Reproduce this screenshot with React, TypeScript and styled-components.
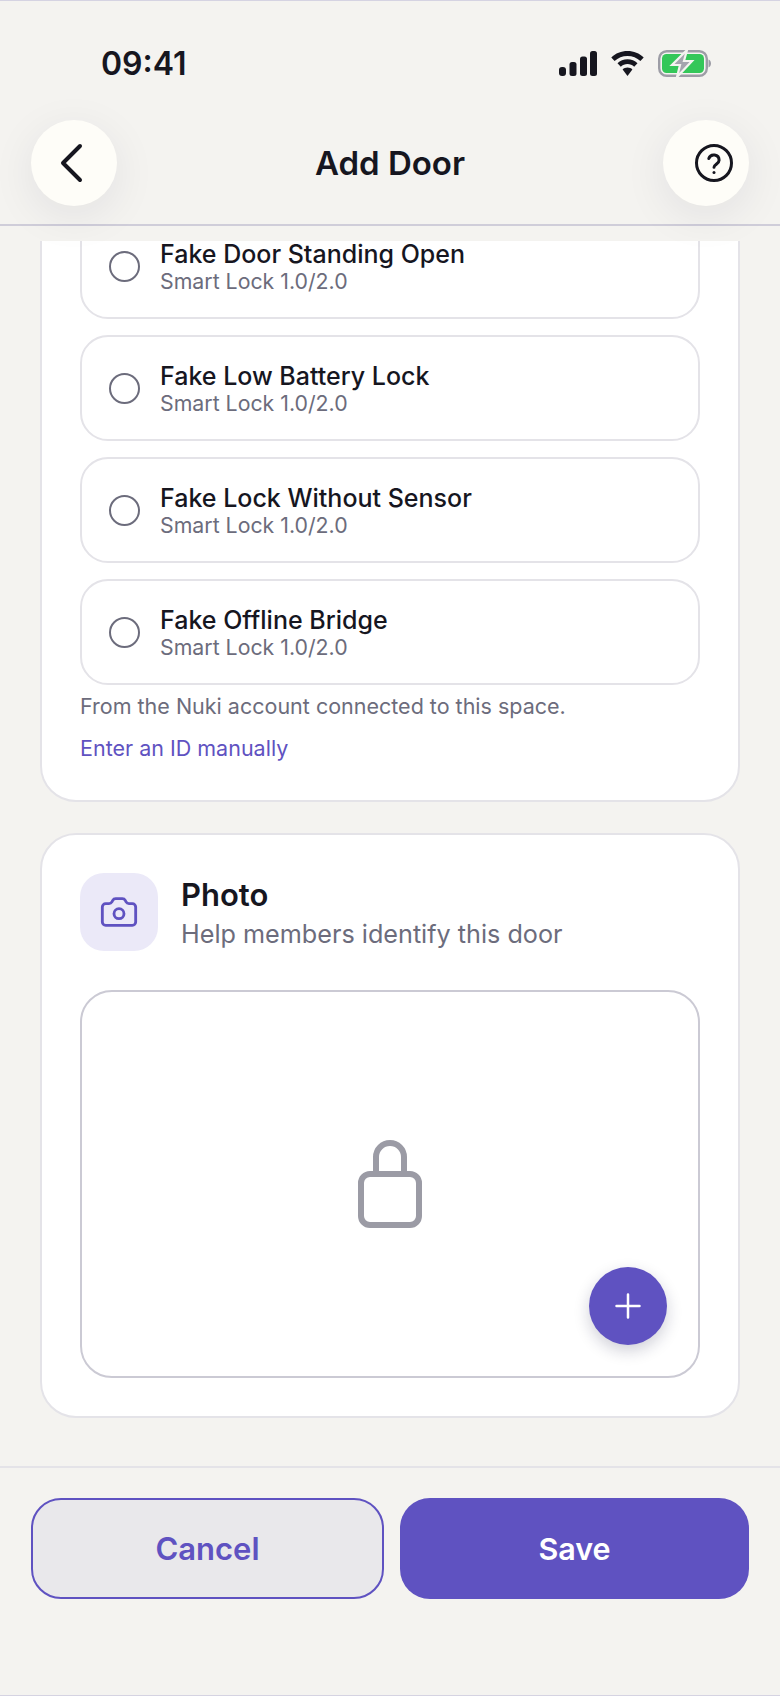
import React from "react";
import styled, { createGlobalStyle } from "styled-components";
import { Camera } from "lucide-react";

const doors = [
  "Fake Door Standing Open",
  "Fake Low Battery Lock",
  "Fake Lock Without Sensor",
  "Fake Offline Bridge",
];

function App() {
  return (
    <Page>
      <GlobalStyle />
      <Header>
        <StatusBar>
          <Clock>09:41</Clock>
          <StatusIcons>
            <svg width="38" height="25" viewBox="0 0 38 25" fill="#16161f">
              <rect x="0" y="16" width="7" height="9" rx="3" />
              <rect x="10.5" y="11" width="7" height="14" rx="2.5" />
              <rect x="21" y="5.5" width="7" height="19.5" rx="2.5" />
              <rect x="31" y="0" width="7" height="25" rx="2.5" />
            </svg>
            <svg width="33" height="25" viewBox="0 0 33 25" fill="#16161f">
              <path d="M16.5 0C10.2 0 4.6 2.4.3 6.4l3.3 3.6C7 6.800 11.500 4.900 16.500 4.900s9.500 1.900 12.900 5.100l3.300-3.600C28.400 2.400 22.800 0 16.500 0z" />
              <path d="M16.500 8.200c-3.900 0-7.400 1.500-10 4l3.300 3.600c1.800-1.600 4.100-2.700 6.700-2.700s4.900 1.100 6.700 2.700l3.300-3.600c-2.600-2.500-6.100-4-10-4z" />
              <path d="M16.500 16.600c-1.900 0-3.600.7-4.900 1.900l4.900 6.500 4.900-6.500c-1.300-1.200-3-1.900-4.900-1.900z" />
            </svg>
            <svg width="53" height="27" viewBox="0 0 53 27">
              <rect x="1.200" y="1.200" width="47.600" height="24.600" rx="7.500" fill="none" stroke="#9d9da6" strokeWidth="2.400" />
              <rect x="4" y="4" width="42" height="19" rx="4.500" fill="#34c759" />
              <path d="M50.500 9.500c1.600.6 2.500 2.200 2.500 4s-.9 3.400-2.500 4z" fill="#9d9da6" />
              <path d="M29 0 14 15h8l-3 12 15-16h-8l3-11z" fill="#a4a4ad" stroke="#f4f3f0" strokeWidth="2.200" />
            </svg>
          </StatusIcons>
        </StatusBar>
        <NavBar>
          <RoundButton>
            <ChevronIcon width="24" height="40" viewBox="0 0 24 40" fill="none" stroke="#16161f" strokeWidth="4" strokeLinecap="round" strokeLinejoin="round">
              <path d="M21 3 4 20l17 17" />
            </ChevronIcon>
          </RoundButton>
          <Title>Add Door</Title>
          <RoundButton>
            <HelpIcon width="40" height="40" viewBox="0 0 40 40" fill="none" stroke="#16161f" strokeWidth="3" strokeLinecap="round" strokeLinejoin="round">
              <circle cx="20" cy="20" r="17.500" />
              <path d="M14.800 15.500a5.300 5.300 0 0 1 10.300 1.700c0 3.500-5.100 4.300-5.100 7" />
              <path d="M20 29.400h.02" />
            </HelpIcon>
          </RoundButton>
        </NavBar>
      </Header>

      <Scroller>
        <ListCard>
          <DoorList>
            {doors.map((name) => (
              <DoorRow key={name}>
                <Radio />
                <div>
                  <DoorName>{name}</DoorName>
                  <DoorModel>Smart Lock 1.0/2.0</DoorModel>
                </div>
              </DoorRow>
            ))}
          </DoorList>
          <Hint>From the Nuki account connected to this space.</Hint>
          <ManualLink>Enter an ID manually</ManualLink>
        </ListCard>

        <Card>
          <SectionHead>
            <IconTile>
              <Camera size={40} strokeWidth={1.7} color="#5f52c1" />
            </IconTile>
            <SectionText>
              <SectionTitle>Photo</SectionTitle>
              <SectionSub>Help members identify this door</SectionSub>
            </SectionText>
          </SectionHead>
          <PhotoBox>
            <svg width="66" height="90" viewBox="0 0 66 90" fill="none" stroke="#9b9ba5" strokeWidth="6" strokeLinejoin="round">
              <path d="M19 34V18a14 14 0 0 1 28 0v16" />
              <rect x="4" y="35" width="58" height="51" rx="9" />
            </svg>
            <AddButton>
              <svg width="26" height="26" viewBox="0 0 26 26" stroke="#fff" strokeWidth="2.500" strokeLinecap="round">
                <path d="M13 1.500v23M1.500 13h23" />
              </svg>
            </AddButton>
          </PhotoBox>
        </Card>
      </Scroller>

      <Footer>
        <CancelButton>Cancel</CancelButton>
        <SaveButton>Save</SaveButton>
      </Footer>
    </Page>
  );
}

const GlobalStyle = createGlobalStyle`
  html, body {
    margin: 0;
    padding: 0;
    background: #f4f3f0;
  }
  * {
    box-sizing: border-box;
  }
`;

const Page = styled.div`
  width: 780px;
  height: 1696px;
  display: flex;
  flex-direction: column;
  overflow: hidden;
  background: #f4f3f0;
  color: #16161f;
  font-family: Inter, "Liberation Sans", sans-serif;
  border-top: 1px solid #d5d3e2;
  border-bottom: 1px solid #d5d3e2;
`;

const Header = styled.header`
  position: relative;
  z-index: 2;
  height: 225px;
  flex: none;
  border-bottom: 2px solid #cfcdd9;
`;

const StatusBar = styled.div`
  display: flex;
  justify-content: space-between;
  align-items: center;
  padding: 48px 69px 0 101px;
  height: 77px;
`;

const Clock = styled.span`
  font-size: 32px;
  font-weight: 600;
  line-height: 28px;
`;

const StatusIcons = styled.div`
  display: flex;
  align-items: center;
  gap: 14px;
`;

const NavBar = styled.div`
  display: flex;
  justify-content: space-between;
  align-items: center;
  padding: 42px 31px 0;
`;

const RoundButton = styled.button`
  width: 86px;
  height: 86px;
  padding: 0;
  display: flex;
  align-items: center;
  justify-content: center;
  border: 0;
  border-radius: 50%;
  background: #fefdf8;
  box-shadow: 0 10px 44px rgba(22, 22, 60, 0.08);
`;

const ChevronIcon = styled.svg`
  margin-right: 7px;
`;

const HelpIcon = styled.svg`
  margin-left: 16px;
`;

const Title = styled.h1`
  margin: 0;
  font-size: 33px;
  font-weight: 600;
`;

const Scroller = styled.main`
  flex: 1;
  min-height: 0;
  margin-top: 15px;
  padding: 0 40px;
  overflow: hidden;
  display: flex;
  flex-direction: column;
  gap: 31px;
`;

const Card = styled.section`
  flex: none;
  padding: 38px;
  background: #fff;
  border: 2px solid #e4e3e8;
  border-radius: 36px;
`;

const ListCard = styled(Card)`
  margin-top: -68px;
  padding-bottom: 37px;
`;

const DoorList = styled.div`
  display: flex;
  flex-direction: column;
  gap: 16px;
`;

const DoorRow = styled.div`
  height: 106px;
  display: flex;
  align-items: center;
  gap: 20px;
  padding-left: 27px;
  border: 2px solid #e4e3e8;
  border-radius: 28px;
`;

const Radio = styled.span`
  width: 31px;
  height: 31px;
  flex: none;
  border: 2.5px solid #6c6c7c;
  border-radius: 50%;
`;

const DoorName = styled.div`
  font-size: 25px;
  font-weight: 500;
  line-height: 32px;
`;

const DoorModel = styled.div`
  margin-top: -2px;
  font-size: 21.300px;
  line-height: 26px;
  color: #6c6c7c;
`;

const Hint = styled.p`
  margin: 6px 0 0;
  font-size: 21.500px;
  line-height: 30px;
  color: #6c6c7c;
`;

const ManualLink = styled.a`
  display: block;
  margin-top: 12px;
  font-size: 21.500px;
  line-height: 30px;
  color: #5f52c1;
`;

const SectionHead = styled.div`
  display: flex;
  align-items: center;
  gap: 23px;
`;

const IconTile = styled.div`
  width: 78px;
  height: 78px;
  display: flex;
  align-items: center;
  justify-content: center;
  border-radius: 24px;
  background: #ebe9f8;
`;

const SectionText = styled.div`
  padding-top: 3px;
`;

const SectionTitle = styled.div`
  font-size: 31px;
  font-weight: 600;
  line-height: 38px;
`;

const SectionSub = styled.div`
  margin-top: 3px;
  font-size: 25.200px;
  line-height: 34px;
  color: #6c6c7c;
`;

const PhotoBox = styled.div`
  position: relative;
  height: 388px;
  margin-top: 39px;
  display: flex;
  align-items: center;
  justify-content: center;
  border: 2px solid #cbcad4;
  border-radius: 32px;
`;

const AddButton = styled.button`
  position: absolute;
  right: 31px;
  bottom: 31px;
  width: 78px;
  height: 78px;
  padding: 0;
  display: flex;
  align-items: center;
  justify-content: center;
  border: 0;
  border-radius: 50%;
  background: #5f52c1;
  box-shadow: 0 6px 16px rgba(22, 22, 60, 0.2);
`;

const Footer = styled.footer`
  flex: none;
  height: 229px;
  display: grid;
  grid-template-columns: 353px 1fr;
  grid-template-rows: 101px;
  gap: 16px;
  padding: 30px 31px 0;
  border-top: 2px solid #e4e3e8;
`;

const FooterButton = styled.button`
  border-radius: 30px;
  font-family: inherit;
  font-weight: 600;
`;

const CancelButton = styled(FooterButton)`
  border: 2px solid #5f52c1;
  background: #e9e8eb;
  color: #5f52c1;
  font-size: 31px;
`;

const SaveButton = styled(FooterButton)`
  border: 0;
  background: #5f52c1;
  color: #fff;
  font-size: 30.500px;
`;

export default App;
